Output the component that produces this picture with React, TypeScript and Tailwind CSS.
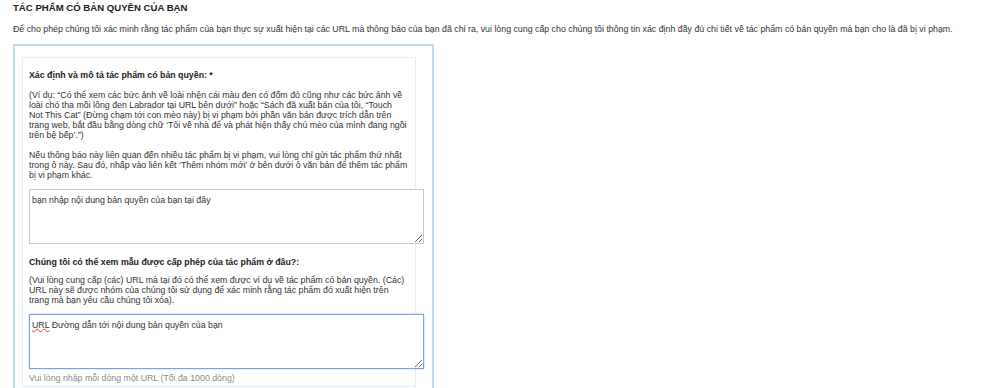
export default function App() {
  return (
    <div className="bg-white w-[1000px] h-[388px] overflow-hidden font-['Liberation_Sans',Arial,sans-serif] text-[8.8px] leading-[10px] text-[#333] pl-[13px] pt-[3px]">
      <h2 className="font-bold text-[9.6px] leading-[10px] text-[#222] uppercase">
        Tác phẩm có bản quyền của bạn
      </h2>
      <p className="mt-[11px] whitespace-nowrap">
        Để cho phép chúng tôi xác minh rằng tác phẩm của bạn thực sự xuất hiện tại các URL mà thông báo của bạn đã chỉ ra, vui lòng cung cấp cho chúng tôi thông tin xác định đầy đủ chi tiết về tác phẩm có bản quyền mà bạn cho là đã bị vi phạm.
      </p>

      <div className="mt-[10px] w-[421px] border-2 border-[#b9dfea] pl-[7px] pt-[11px] pb-4">
        <div className="w-[394px] border border-[#e3edf5] px-[6px] pt-[12px] pb-[3px]">
          <label className="block font-bold text-[#222]">
            Xác định và mô tả tác phẩm có bản quyền: *
          </label>
          <p className="mt-[10px] whitespace-nowrap">
            (Ví dụ: “Có thể xem các bức ảnh về loài nhện cái màu đen có đốm đỏ cũng như các bức ảnh về<br />
            loài chó tha mồi lông đen Labrador tại URL bên dưới” hoặc “Sách đã xuất bản của tôi, “Touch<br />
            Not This Cat” (Đừng chạm tới con mèo này) bị vi phạm bởi phần văn bản được trích dẫn trên<br />
            trang web, bắt đầu bằng dòng chữ ‘Tôi về nhà để và phát hiện thấy chú mèo của mình đang ngồi<br />
            trên bệ bếp’.”)
          </p>
          <p className="mt-[10px] whitespace-nowrap">
            Nếu thông báo này liên quan đến nhiều tác phẩm bị vi phạm, vui lòng chỉ gửi tác phẩm thứ nhất<br />
            trong ô này. Sau đó, nhấp vào liên kết ‘Thêm nhóm mới’ ở bên dưới ô văn bản để thêm tác phẩm<br />
            bị vi phạm khác.
          </p>
          <textarea
            defaultValue="bạn nhập nội dung bản quyền của bạn tại đây"
            spellCheck={false}
            className="block mt-[9px] w-[395px] h-[55px] border border-[#c9c9c9] bg-white px-[2px] pt-[5px] pb-[3px] text-[8.8px] leading-[10px] text-[#333] outline-none"
          />

          <label className="block mt-[13px] font-bold text-[#222]">
            Chúng tôi có thể xem mẫu được cấp phép của tác phẩm ở đâu?:
          </label>
          <p className="mt-[8px] whitespace-nowrap">
            (Vui lòng cung cấp (các) URL mà tại đó có thể xem được ví dụ về tác phẩm có bản quyền. (Các)<br />
            URL này sẽ được nhóm của chúng tôi sử dụng để xác minh rằng tác phẩm đó xuất hiện trên<br />
            trang mà bạn yêu cầu chúng tôi xóa).
          </p>
          <div className="relative mt-[9px] w-[395px]">
            <textarea
              defaultValue="URL Đường dẫn tới nội dung bản quyền của bạn"
              spellCheck={false}
              className="block w-[395px] h-[55px] border border-[#78a4dc] shadow-[0_0_2px_#a9c8ef] bg-white px-[2px] pt-[5px] pb-[3px] text-[8.8px] leading-[10px] text-[#333] outline-none"
            />
            <span className="pointer-events-none absolute left-[3px] top-[5px] leading-[10px] text-transparent underline decoration-wavy decoration-[#e0392b] decoration-1 underline-offset-1">
              URL
            </span>
          </div>
          <p className="mt-[4px] text-[#8a8a8a]">
            Vui lòng nhập mỗi dòng một URL (Tối đa 1000 dòng)
          </p>
        </div>
      </div>
    </div>
  );
}
